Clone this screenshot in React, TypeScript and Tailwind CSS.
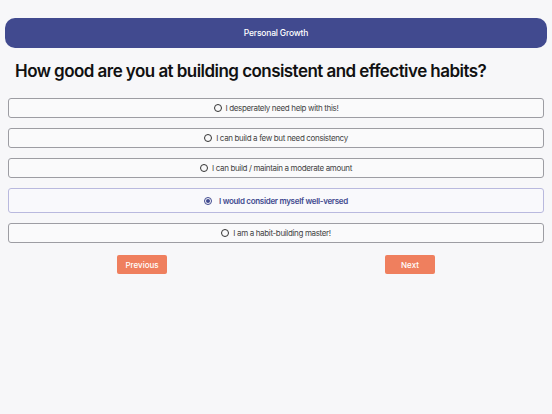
const options = [
  "I desperately need help with this!",
  "I can build a few but need consistency",
  "I can build / maintain a moderate amount",
  "I would consider myself well-versed",
  "I am a habit-building master!",
];

export default function App() {
  const selected = 3;

  return (
    <div className="min-h-screen bg-[#f7f7f9] px-[5px] pt-[18px] font-['Inter',sans-serif]">
      <div className="h-[30px] rounded-[10px] bg-[#414a8f] flex items-center justify-center">
        <p className="text-[8.5px] font-medium text-white tracking-[-0.2px]">Personal Growth</p>
      </div>

      <h1 className="mt-[12px] ml-[10px] text-[17px] leading-[22px] font-semibold text-[#111] tracking-[-0.55px]">
        How good are you at building consistent and effective habits?
      </h1>

      <div className="mt-[16px] mx-[3px] flex flex-col gap-[10px]">
        {options.map((label, i) =>
          i === selected ? (
            <div
              key={i}
              className="h-[25px] rounded-[3px] border border-[#b9b9de] bg-[#f9f9fc] flex items-center justify-center gap-[7px]"
            >
              <span className="w-[8px] h-[8px] rounded-full border border-[#414a8f] flex items-center justify-center">
                <span className="w-[4px] h-[4px] rounded-full bg-[#414a8f]" />
              </span>
              <span className="text-[8px] font-semibold text-[#414a8f] tracking-[-0.3px]">{label}</span>
            </div>
          ) : (
            <div
              key={i}
              className="h-[20px] rounded-[3px] border border-[#9d9da3] bg-[#fafafb] flex items-center justify-center gap-[4px]"
            >
              <span className="w-[8px] h-[8px] rounded-full border-[1.5px] border-[#333]" />
              <span className="text-[8px] text-[#444] tracking-[-0.35px]">{label}</span>
            </div>
          )
        )}
      </div>

      <div className="mt-[12px] mx-[3px] flex justify-around">
        <button className="w-[50px] h-[19px] rounded-[2px] bg-[#ef7f5e] text-white text-[8px] font-medium">
          Previous
        </button>
        <button className="w-[50px] h-[19px] rounded-[2px] bg-[#ef7f5e] text-white text-[8px] font-medium">
          Next
        </button>
      </div>
    </div>
  );
}
